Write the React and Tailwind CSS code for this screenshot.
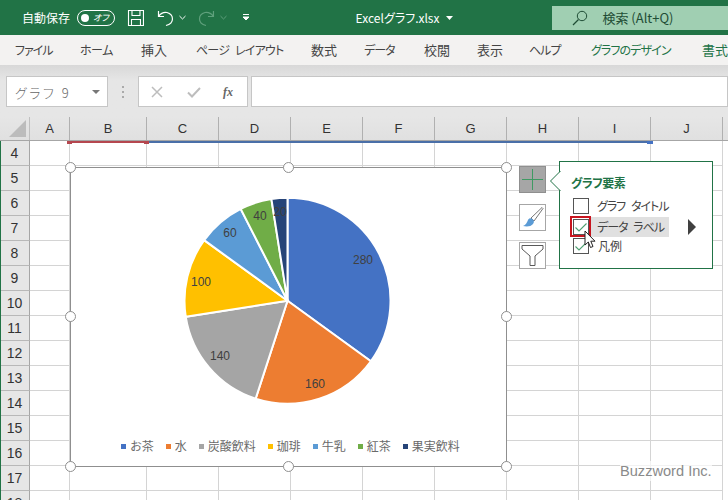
import React from "react";

const tabs = [
  { label: "ファイル", cls: "w-[66px] pl-[14px] tracking-[-1px]" },
  { label: "ホーム", cls: "w-[61px] pl-[13px] tracking-[-0.5px]" },
  { label: "挿入", cls: "w-[54px] pl-[13px] text-[13px]" },
  { label: "ページ レイアウト", cls: "w-[116px] pl-[14px] tracking-[-0.8px] [word-spacing:4px]" },
  { label: "数式", cls: "w-[53px] pl-[13px] text-[13px]" },
  { label: "データ", cls: "w-[59px] pl-[13px] tracking-[-1px]" },
  { label: "校閲", cls: "w-[53px] pl-[14px] text-[13px]" },
  { label: "表示", cls: "w-[53px] pl-[14px] text-[13px]" },
  { label: "ヘルプ", cls: "w-[61px] pl-[13px] tracking-[-1px]" },
  { label: "グラフのデザイン", cls: "w-[111px] pl-[14px] tracking-[-0.9px] text-[#217346]" },
  { label: "書式", cls: "w-[40px] pl-[14px] text-[13px] text-[#217346]" },
];

const cols = [
  { name: "A", w: "w-[40px]" },
  { name: "B", w: "w-[77px]" },
  { name: "C", w: "w-[72px]" },
  { name: "D", w: "w-[72px]" },
  { name: "E", w: "w-[72px]" },
  { name: "F", w: "w-[72px]" },
  { name: "G", w: "w-[72px]" },
  { name: "H", w: "w-[72px]" },
  { name: "I", w: "w-[72px]" },
  { name: "J", w: "w-[72px]" },
];

const rows = [4, 5, 6, 7, 8, 9, 10, 11, 12, 13, 14, 15, 16, 17, 18];

const slices = [
  { v: 280, c: "#4472c4" },
  { v: 160, c: "#ed7d31" },
  { v: 140, c: "#a5a5a5" },
  { v: 100, c: "#ffc000" },
  { v: 60, c: "#5b9bd5" },
  { v: 40, c: "#70ad47" },
  { v: 20, c: "#264478" },
];

const pieLabels = [
  { t: "280", x: 292, y: 96 },
  { t: "160", x: 244, y: 220 },
  { t: "140", x: 149, y: 192 },
  { t: "100", x: 130, y: 118 },
  { t: "60", x: 159, y: 69 },
  { t: "40", x: 189, y: 52 },
  { t: "20", x: 209, y: 48 },
];

const legend = [
  { t: "お茶", c: "bg-[#4472c4]" },
  { t: "水", c: "bg-[#ed7d31]" },
  { t: "炭酸飲料", c: "bg-[#a5a5a5]" },
  { t: "珈琲", c: "bg-[#ffc000]" },
  { t: "牛乳", c: "bg-[#5b9bd5]" },
  { t: "紅茶", c: "bg-[#70ad47]" },
  { t: "果実飲料", c: "bg-[#264478]" },
];

const handles = [
  "left-[-6px] top-[-6px]",
  "left-[212px] top-[-6px]",
  "left-[430px] top-[-6px]",
  "left-[-6px] top-[143px]",
  "left-[430px] top-[143px]",
  "left-[-6px] top-[293px]",
  "left-[212px] top-[293px]",
  "left-[430px] top-[293px]",
];

function Pie() {
  const cx = 216.5;
  const cy = 132.7;
  const r = 103;
  let total = 0;
  const paths = slices.map((s) => {
    const a0 = (total / 800) * 2 * Math.PI;
    total += s.v;
    const a1 = (total / 800) * 2 * Math.PI;
    const big = a1 - a0 > Math.PI ? 1 : 0;
    const d = `M${cx} ${cy}L${cx + r * Math.sin(a0)} ${cy - r * Math.cos(a0)}A${r} ${r} 0 ${big} 1 ${cx + r * Math.sin(a1)} ${cy - r * Math.cos(a1)}Z`;
    return <path key={s.v} d={d} fill={s.c} stroke="#fff" strokeWidth="2" />;
  });
  return (
    <svg width="435" height="270" className="block">
      {paths}
      {pieLabels.map((l) => (
        <text key={l.t} x={l.x} y={l.y} textAnchor="middle" fontSize="12" fill="#404040" fontFamily="'Liberation Sans', sans-serif">
          {l.t}
        </text>
      ))}
    </svg>
  );
}

function Check() {
  return (
    <svg width="14" height="14" viewBox="0 0 14 14" className="block">
      <path d="M1.5 7.5 5 11 12.5 3.5" fill="none" stroke="#4ea072" strokeWidth="1.1" />
    </svg>
  );
}

export default function App() {
  return (
    <div className="relative w-[728px] h-[500px] overflow-hidden bg-white text-[#444] font-['Noto_Sans_CJK_JP','Liberation_Sans',sans-serif] [font-feature-settings:'palt']">
      {/* title bar */}
      <div className="flex items-center h-[35px] bg-[#217346] text-white">
        <span className="ml-[22px] text-[12px] w-[55px] whitespace-nowrap">自動保存</span>
        <div className="flex items-center justify-between w-[38px] h-[16px] rounded-full border border-white px-[3px]">
          <span className="w-[8px] h-[8px] rounded-full bg-white" />
          <span className="text-[9px] italic leading-none pr-[2px]">オフ</span>
        </div>
        <svg width="18" height="18" viewBox="0 0 18 18" className="ml-[12px]">
          <path d="M1.5 1.5H16.5V16.5H1.5ZM5 1.5V6.5H13V1.5M4.5 16.5V10.5H13.5V16.5" fill="none" stroke="#fff" strokeWidth="1.1" />
        </svg>
        <svg width="17" height="18" viewBox="0 0 17 18" className="ml-[12px]">
          <path d="M1.5 2V7.5H7M1.7 7.3C4 4 7 3 10 3.5C13.5 4.5 15.5 7 15.5 10C15.5 13 13 15.5 9 16.5" fill="none" stroke="#fff" strokeWidth="1.2" />
        </svg>
        <svg width="7" height="5" viewBox="0 0 7 5" className="ml-[5px]">
          <path d="M0.5 1 3.5 4 6.5 1" fill="none" stroke="#fff" strokeWidth="1" />
        </svg>
        <svg width="17" height="18" viewBox="0 0 17 18" className="ml-[12px]">
          <path d="M15.5 2V7.5H10M15.3 7.3C13 4 10 3 7 3.5C3.5 4.5 1.5 7 1.5 10C1.5 13 4 15.5 8 16.5" fill="none" stroke="#5fa07c" strokeWidth="1.2" />
        </svg>
        <svg width="7" height="5" viewBox="0 0 7 5" className="ml-[5px]">
          <path d="M0.5 1 3.5 4 6.5 1" fill="none" stroke="#5fa07c" strokeWidth="1" />
        </svg>
        <svg width="8" height="7" viewBox="0 0 8 7" className="ml-[15px]">
          <path d="M1 .5H7M1 3 4 6 7 3Z" fill="#fff" stroke="#fff" strokeWidth="1" />
        </svg>
        <span className="ml-[106px] w-[84px] text-[12px] whitespace-nowrap">Excelグラフ.xlsx</span>
        <svg width="7" height="4" viewBox="0 0 7 4" className="ml-[7px]">
          <path d="M0 0H7L3.5 4Z" fill="#fff" />
        </svg>
        <div className="ml-[99px] flex items-center w-[176px] h-[24px] bg-[#a0cfb2] text-[#1f4d35]">
          <svg width="16" height="16" viewBox="0 0 16 16" className="ml-[20px]">
            <circle cx="10" cy="6" r="4.7" fill="none" stroke="#1f4d35" strokeWidth="1" />
            <path d="M6.5 9.5 1 15" stroke="#1f4d35" strokeWidth="1.2" />
          </svg>
          <span className="ml-[14px] text-[13px] whitespace-nowrap">検索 (Alt+Q)</span>
        </div>
      </div>

      {/* ribbon tabs */}
      <div className="flex items-center h-[30px] bg-[#f3f2f1] text-[12px] pl-px">
        {tabs.map((t) => (
          <span key={t.label} className={"whitespace-nowrap " + t.cls}>
            {t.label}
          </span>
        ))}
      </div>

      {/* formula bar */}
      <div className="flex h-[52px] pt-[11px] bg-gradient-to-b from-[#d8d8d8] via-[#e6e6e6] via-30% to-[#e6e6e6]">
        <div className="flex items-center ml-[6px] w-[102px] h-[31px] bg-white border border-[#c6c6c6] pl-[8px] text-[13px] text-[#666]">
          <span className="tracking-[2.5px] flex-1 font-light pt-[2px]">グラフ 9</span>
          <span className="mr-[7px] w-0 h-0 border-x-[4px] border-x-transparent border-t-[4px] border-t-[#777]" />
        </div>
        <div className="ml-[14px] mt-[10px] flex flex-col gap-[3px] w-[2px]">
          <span className="h-[2px] bg-[#aaa]" />
          <span className="h-[2px] bg-[#aaa]" />
          <span className="h-[2px] bg-[#aaa]" />
        </div>
        <div className="flex items-center ml-[14px] w-[110px] h-[31px] bg-white border border-[#c6c6c6]">
          <svg width="12" height="12" viewBox="0 0 12 12" className="ml-[12px]">
            <path d="M1 1 11 11M11 1 1 11" stroke="#bdbdbd" strokeWidth="1.5" />
          </svg>
          <svg width="14" height="12" viewBox="0 0 14 12" className="ml-[24px]">
            <path d="M1 6.5 5 10.5 13 2" fill="none" stroke="#bdbdbd" strokeWidth="2" />
          </svg>
          <span className="ml-[22px] text-[12px] italic font-bold text-[#666] font-['Liberation_Serif',serif]">fx</span>
        </div>
        <div className="ml-[3px] flex-1 h-[31px] bg-white border border-[#c6c6c6]" />
      </div>

      {/* column headers */}
      <div className="flex h-[24px] bg-gradient-to-b from-[#e6e6e6] to-[#e0e0e0] border-b border-b-[#a6a6a6] text-[13px] text-[#333] font-['Liberation_Sans',sans-serif]">
        <div className="relative w-[30px] border-r border-r-[#c0c0c0]">
          <span className="absolute right-[3px] bottom-[3px] w-0 h-0 border-l-[17px] border-l-transparent border-b-[17px] border-b-[#bcbcbc]" />
        </div>
        {cols.map((c) => (
          <div key={c.name} className={"flex items-center justify-center pt-px shrink-0 border-r border-r-[#b0b0b0] " + c.w}>
            {c.name}
          </div>
        ))}
      </div>

      {/* sheet */}
      <div className="relative">
        {rows.map((r) => (
          <div key={r} className="flex h-[25px]">
            <div className="flex items-center justify-center w-[30px] shrink-0 bg-[#e6e6e6] border-r border-r-[#a6a6a6] border-b border-b-[#b8b8b8] text-[14px] text-[#333] font-['Liberation_Sans',sans-serif]">
              {r}
            </div>
            {cols.map((c) => (
              <div key={c.name} className={"shrink-0 border-r border-b border-[#d4d4d4] " + c.w} />
            ))}
          </div>
        ))}

        {/* left window edge */}
        <div className="absolute left-0 top-0 bottom-0 w-px bg-[#217346]" />

        {/* selection range markers */}
        <div className="absolute left-[72px] top-0 w-[72px] h-[2px] bg-[#b5474f]" />
        <div className="absolute left-[67px] top-0 w-[5px] h-[3px] bg-[#b5474f]" />
        <div className="absolute left-[144px] top-0 w-[5px] h-[3px] bg-[#b5474f]" />
        <div className="absolute left-[149px] top-0 w-[498px] h-[2px] bg-[#4a6fa8]" />
        <div className="absolute left-[647px] top-0 w-[6px] h-[3px] bg-[#4472c4]" />

        {/* chart */}
        <div className="absolute left-[70px] top-[26px] w-[437px] h-[300px] bg-white border border-[#8f8f8f]">
          <Pie />
          <div className="flex items-center justify-center gap-[12px] pl-[4px] text-[12px] leading-[16px] text-[#6a6a6a]">
            {legend.map((l) => (
              <div key={l.t} className="flex items-center gap-[4px]">
                <span className={"w-[5px] h-[5px] " + l.c} />
                <span className="whitespace-nowrap [font-feature-settings:'normal']">{l.t}</span>
              </div>
            ))}
          </div>
          {handles.map((h) => (
            <span key={h} className={"absolute w-[11px] h-[11px] rounded-full bg-white border-[1.5px] border-[#8f8f8f] " + h} />
          ))}
        </div>

        {/* chart buttons */}
        <div className="absolute left-[519px] top-[25px] flex flex-col gap-[11px]">
          <div className="flex items-center justify-center w-[27px] h-[27px] bg-[#a6a6a6] border border-[#8f8f8f]">
            <svg width="21" height="21" viewBox="0 0 21 21">
              <path d="M10.5 0V21M0 10.5H21" stroke="#3f9a63" strokeWidth="1" />
            </svg>
          </div>
          <div className="flex items-center justify-center w-[27px] h-[27px] bg-white border border-[#a6a6a6]">
            <svg width="23" height="23" viewBox="0 0 23 23">
              <path d="M10 12 21 1.5 22 2.5 13 15Z" fill="#fff" stroke="#777" strokeWidth="1" />
              <path d="M2 20C5 19 6 16 7 14C8 12 10 12 11.5 13C13 14 13.5 16 12 18C10 20.5 6 21 2 20Z" fill="#5b9bd5" />
            </svg>
          </div>
          <div className="flex items-center justify-center w-[27px] h-[27px] bg-white border border-[#a6a6a6]">
            <svg width="23" height="23" viewBox="0 0 23 23">
              <path d="M1 1.5H22V5L14 12V21.5H9V12L1 5Z" fill="#fff" stroke="#595959" strokeWidth="1" />
            </svg>
          </div>
        </div>

        {/* popup */}
        <div className="absolute left-[559px] top-[20px] w-[154px] h-[108px] bg-white border border-[#217346] pl-[11px] pt-[12px]">
          <svg width="11" height="20" viewBox="0 0 11 20" className="absolute left-[-10px] top-[9px]">
            <path d="M10.5 0 0.5 10 10.5 20" fill="#fff" stroke="#217346" strokeWidth="1" />
          </svg>
          <div className="text-[12px] leading-[18px] font-bold tracking-[-0.5px] text-[#217346]">グラフ要素</div>
          <div className="flex flex-col mt-[4px] text-[12px] text-[#444]">
            <div className="flex items-center h-[20px]">
              <span className="w-[16px] h-[16px] ml-[2px] border border-[#555]" />
              <span className="ml-[8px] tracking-[-1px] [word-spacing:4px] whitespace-nowrap">グラフ タイトル</span>
            </div>
            <div className="flex items-center h-[22px]">
              <span className="relative w-[16px] h-[16px] ml-[2px] border border-[#555]">
                <Check />
                <span className="absolute left-[-4px] top-[-4px] w-[21px] h-[21px] border-[2.5px] border-[#c8141e]" />
              </span>
              <span className="ml-[2px] pl-[6px] w-[78px] h-[20px] leading-[20px] tracking-[-1px] [word-spacing:4px] bg-[#e0e0e0] whitespace-nowrap">データ ラベル</span>
              <span className="ml-[19px] w-0 h-0 border-y-[8px] border-y-transparent border-l-[8px] border-l-[#404040]" />
            </div>
            <div className="flex items-center h-[16px]">
              <span className="w-[16px] h-[16px] ml-[2px] border border-[#555]">
                <Check />
              </span>
              <span className="ml-[9px] whitespace-nowrap">凡例</span>
            </div>
          </div>
          <svg width="13" height="19" viewBox="0 0 13 19" className="absolute left-[24px] top-[68px]">
            <path d="M1 1V15L4.3 12 6.5 17.5 9 16.5 6.8 11.2H11Z" fill="#fff" stroke="#222" strokeWidth="1" />
          </svg>
        </div>

        {/* watermark */}
        <span className="absolute left-[620px] top-[320px] text-[14.6px] leading-[20px] text-[#8a8a8a] whitespace-nowrap font-['Liberation_Sans',sans-serif] bg-white/70">
          Buzzword Inc.
        </span>
      </div>
    </div>
  );
}
